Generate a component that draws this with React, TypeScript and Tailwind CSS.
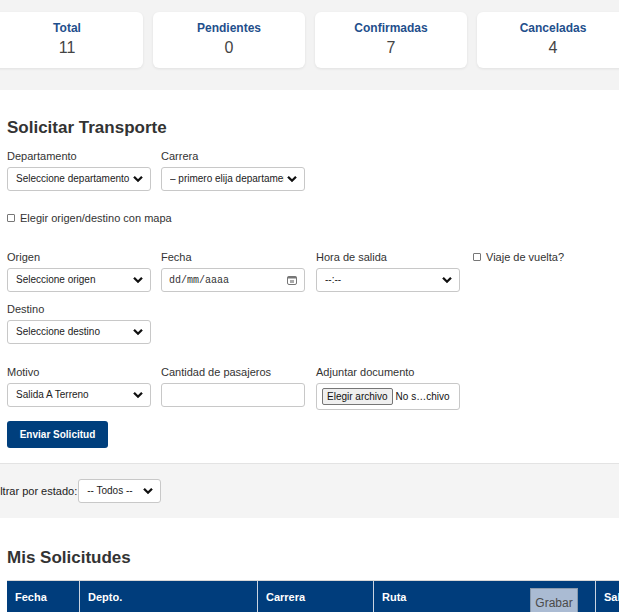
import React from "react";

const font = { fontFamily: '"Liberation Sans", Arial, sans-serif' };

function Chevron() {
  return (
    <svg width="10" height="7" viewBox="0 0 10 7" className="pointer-events-none absolute right-[7px] top-1/2 -translate-y-1/2">
      <path d="M1 1.2 L5 5.2 L9 1.2" fill="none" stroke="#111" strokeWidth="2.3" />
    </svg>
  );
}

function Select({ value, w = "w-[144px]" }: { value: string; w?: string }) {
  return (
    <div className={`relative ${w} h-[24px] rounded-[3px] border border-[#c8c8c8] bg-white pl-[8px] text-[10px] leading-[22px] text-[#222]`}>
      <span className="mr-[20px] block overflow-hidden whitespace-nowrap">{value}</span>
      <Chevron />
    </div>
  );
}

function Label({ children }: { children: React.ReactNode }) {
  return <div className="mb-[4px] h-[14px] text-[11px] leading-[14px] text-[#333]">{children}</div>;
}

function Check({ label }: { label: string }) {
  return (
    <label className="flex items-center gap-[5px] text-[11px] leading-[14px] text-[#333]">
      <span className="inline-block h-[8px] w-[8px] rounded-[1px] border border-[#777] bg-white" />
      {label}
    </label>
  );
}

const stats = [
  { label: "Total", value: "11" },
  { label: "Pendientes", value: "0" },
  { label: "Confirmadas", value: "7" },
  { label: "Canceladas", value: "4" },
];

const cols = [
  { h: "Fecha", w: "w-[72px]" },
  { h: "Depto.", w: "w-[178px]" },
  { h: "Carrera", w: "w-[116px]" },
  { h: "Ruta", w: "w-[222px]" },
  { h: "Salida", w: "w-[80px]" },
];

export default function App() {
  return (
    <div className="h-[612px] w-[619px] overflow-hidden bg-white" style={font}>
      {/* resumen */}
      <div className="h-[90px] bg-[#f3f3f3] pt-[12px]">
        <div className="-ml-[9px] flex gap-[10px]">
          {stats.map((s) => (
            <div key={s.label} className="flex h-[56px] w-[152px] shrink-0 flex-col items-center rounded-[6px] bg-white pt-[9px] shadow-[0_1px_3px_rgba(0,0,0,0.08)]">
              <div className="text-[12px] font-bold leading-[14px] text-[#1f4f8c]">{s.label}</div>
              <div className="mt-[4px] text-[16px] leading-[18px] text-[#444]">{s.value}</div>
            </div>
          ))}
        </div>
      </div>

      {/* formulario */}
      <div className="h-[374px] border-b border-[#e3e3e3] bg-white pl-[7px] pt-[28px]">
        <h2 className="h-[20px] text-[17px] font-bold leading-[20px] text-[#333]">Solicitar Transporte</h2>
        <div className="mt-[11px] flex gap-[10px]">
          <div>
            <Label>Departamento</Label>
            <Select value="Seleccione departamento" />
          </div>
          <div>
            <Label>Carrera</Label>
            <Select value="– primero elija departamento" />
          </div>
        </div>
        <div className="mt-[20px]">
          <Check label="Elegir origen/destino con mapa" />
        </div>

        <div className="mt-[25px] flex gap-[10px]">
          <div>
            <Label>Origen</Label>
            <Select value="Seleccione origen" />
          </div>
          <div>
            <Label>Fecha</Label>
            <div className="relative flex h-[24px] w-[144px] items-center rounded-[3px] border border-[#c8c8c8] bg-white pl-[7px] text-[10px] text-[#333]" style={{ fontFamily: '"Liberation Mono", monospace' }}>
              dd/mm/aaaa
              <svg width="10" height="10" viewBox="0 0 10 10" className="absolute right-[7px] top-1/2 -translate-y-1/2">
                <rect x="0.5" y="1.5" width="9" height="8" rx="1.5" fill="none" stroke="#777" />
                <rect x="0.5" y="1.5" width="9" height="2" fill="#777" />
                <rect x="3" y="5" width="4" height="3" fill="#aaa" />
              </svg>
            </div>
          </div>
          <div className="ml-px">
            <Label>Hora de salida</Label>
            <Select value="--:--" />
          </div>
          <div className="ml-[3px]">
            <Check label="Viaje de vuelta?" />
          </div>
        </div>
        <div className="mt-[10px]">
          <Label>Destino</Label>
          <Select value="Seleccione destino" />
        </div>

        <div className="mt-[21px] flex gap-[10px]">
          <div>
            <Label>Motivo</Label>
            <Select value="Salida A Terreno" />
          </div>
          <div>
            <Label>Cantidad de pasajeros</Label>
            <div className="h-[24px] w-[144px] rounded-[3px] border border-[#c8c8c8] bg-white" />
          </div>
          <div className="ml-px">
            <Label>Adjuntar documento</Label>
            <div className="flex h-[27px] w-[144px] items-center overflow-hidden rounded-[3px] border border-[#c8c8c8] bg-white pl-[5px] text-[10px] text-[#111]">
              <span className="shrink-0 whitespace-nowrap rounded-[2px] border border-[#767676] bg-[#efefef] px-[4px] leading-[15px]">Elegir archivo</span>
              <span className="ml-[3px] whitespace-nowrap">No s…chivo</span>
            </div>
          </div>
        </div>

        <button className="mt-[11px] h-[27px] w-[101px] rounded-[3px] bg-[#003f7d] text-[10px] font-bold text-white">
          Enviar Solicitud
        </button>
      </div>

      {/* filtro */}
      <div className="flex h-[54px] items-center bg-[#f4f4f4]">
        <span className="-ml-[9px] text-[11px] text-[#222]">Filtrar por estado:</span>
        <div className="ml-[1px]">
          <Select value="-- Todos --" w="w-[83px]" />
        </div>
      </div>

      {/* listado */}
      <div className="bg-white pl-[7px] pt-[30px]">
        <h2 className="h-[20px] text-[17px] font-bold leading-[20px] text-[#333]">Mis Solicitudes</h2>
        <div className="relative mt-[12px] border-t border-[#d8d8d8]">
          <div className="flex h-[33px] bg-[#003d7c]">
            {cols.map((c, i) => (
              <div key={c.h} className={`${c.w} shrink-0 pl-[8px] text-[11px] font-bold leading-[33px] text-white ${i > 0 ? "border-l border-[#c9d3e0]" : ""}`}>
                {c.h}
              </div>
            ))}
          </div>
          <div className="absolute left-[523px] top-[7px] h-[26px] w-[48px] border border-[#8899ad] bg-[#aabbd3] pt-[6px] text-center text-[12px] leading-[16px] text-[#4a4a4a]">
            Grabar
          </div>
        </div>
      </div>
    </div>
  );
}
